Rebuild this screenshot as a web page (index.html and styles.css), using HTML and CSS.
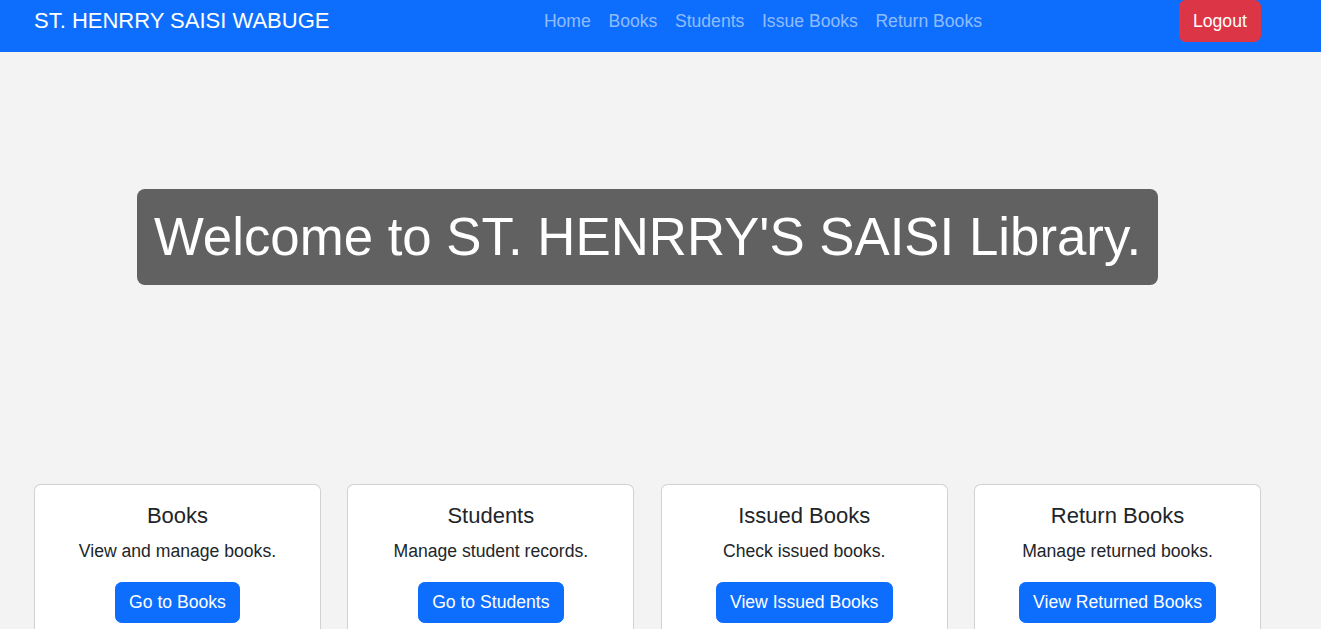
FILE: index.html
```html
<!DOCTYPE html>
<html lang="en">
<head>
<meta charset="utf-8">
<title>St. Henrry Saisi Library</title>
<link rel="stylesheet" href="styles.css">
</head>
<body>
<nav class="navbar">
  <div class="nav-inner">
    <a class="brand" href="#">ST. HENRRY SAISI WABUGE</a>
    <ul class="nav-links">
      <li><a href="#">Home</a></li>
      <li><a href="#">Books</a></li>
      <li><a href="#">Students</a></li>
      <li><a href="#">Issue Books</a></li>
      <li><a href="#">Return Books</a></li>
    </ul>
    <a class="btn btn-danger" href="#">Logout</a>
  </div>
</nav>
<main class="container">
  <section class="hero">
    <h1 class="hero-title">Welcome to ST. HENRRY'S SAISI Library.</h1>
  </section>
  <section class="cards">
    <div class="card">
      <h5 class="card-title">Books</h5>
      <p class="card-text">View and manage books.</p>
      <a class="btn btn-primary" href="#">Go to Books</a>
    </div>
    <div class="card">
      <h5 class="card-title">Students</h5>
      <p class="card-text">Manage student records.</p>
      <a class="btn btn-primary" href="#">Go to Students</a>
    </div>
    <div class="card">
      <h5 class="card-title">Issued Books</h5>
      <p class="card-text">Check issued books.</p>
      <a class="btn btn-primary" href="#">View Issued Books</a>
    </div>
    <div class="card">
      <h5 class="card-title">Return Books</h5>
      <p class="card-text">Manage returned books.</p>
      <a class="btn btn-primary" href="#">View Returned Books</a>
    </div>
  </section>
</main>
</body>
</html>
```

FILE: styles.css
```css
* { box-sizing: border-box; }
html, body { margin: 0; padding: 0; }
body {
  background: #f3f3f3;
  font-family: "Liberation Sans", Arial, sans-serif;
  font-size: 17.6px;
  line-height: 1.5;
  color: #212529;
  overflow: hidden;
}
a { text-decoration: none; }

.navbar {
  background: #0d6efd;
  height: 52px;
}
.nav-inner {
  display: flex;
  align-items: center;
  height: 42px;
  padding: 0 60px 0 34px;
}
.brand {
  color: #fff;
  font-size: 22px;
  line-height: 1.2;
  margin-right: 17.6px;
  white-space: nowrap;
}
.nav-links {
  list-style: none;
  display: flex;
  margin: 0 auto;
  padding: 0;
}
.nav-links a {
  display: block;
  padding: 0 8.8px;
  color: rgba(255, 255, 255, 0.55);
  line-height: 26.4px;
}

.btn {
  display: inline-block;
  padding: 6.6px 13.2px;
  font-size: 17.6px;
  line-height: 26.4px;
  border: 1px solid transparent;
  border-radius: 6.6px;
  color: #fff;
  text-align: center;
  white-space: nowrap;
}
.btn-danger { background: #dc3545; border-color: #dc3545; }
.btn-primary { background: #0d6efd; border-color: #0d6efd; }

.container {
  padding: 0 60px 0 34px;
}
.hero {
  padding: 137px 0 199px;
  text-align: center;
}
.hero-title {
  display: inline-block;
  margin: 0;
  background: #616161;
  color: #fff;
  font-weight: 400;
  font-size: 52.8px;
  line-height: 62px;
  padding: 17px 17px;
  border-radius: 8px;
}

.cards {
  display: grid;
  grid-template-columns: repeat(4, 1fr);
  column-gap: 26.4px;
}
.card {
  background: #fff;
  border: 1px solid rgba(0, 0, 0, 0.175);
  border-radius: 6.6px;
  padding: 17.6px 17.6px 40px;
  text-align: center;
}
.card-title {
  margin: 0 0 8.8px;
  font-size: 22px;
  font-weight: 400;
  line-height: 1.2;
}
.card-text {
  margin: 0 0 17.6px;
}
```
